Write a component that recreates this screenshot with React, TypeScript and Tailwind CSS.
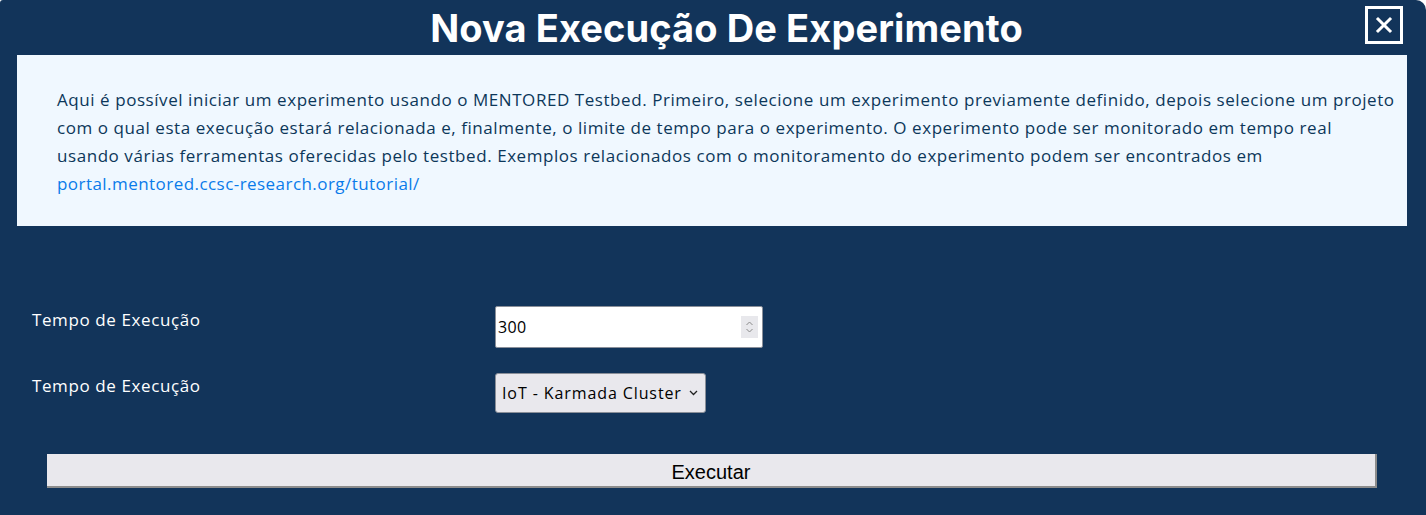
import React from "react";

export default function App() {
  return (
    <div className="w-[1426px] h-[515px] bg-white overflow-hidden">
      <div className="w-full h-full bg-[#12345a] rounded-tr-[10px] rounded-tl-[3px] flex flex-col">
        <div className="relative h-[55px] flex items-center justify-center pl-[27px]">
          <h1
            className="text-white text-[38px] font-bold leading-none tracking-[0.1px]"
            style={{ fontFamily: "Inter, 'Noto Sans', sans-serif" }}
          >
            Nova Execução De Experimento
          </h1>
          <button className="absolute left-[1365px] top-[6px] w-[38px] h-[38px] border-[3px] border-white flex items-center justify-center">
            <svg width="20" height="20" viewBox="0 0 20 20" fill="none" stroke="white" strokeWidth="3" strokeLinecap="square">
              <path d="M4 4 L16 16 M16 4 L4 16" />
            </svg>
          </button>
        </div>
        <div
          className="mx-[17px] mr-[19px] h-[171px] bg-[#f0f8ff] pl-[40px] pr-[4px] pt-[31px] text-[#0c375a] text-[17px] font-medium leading-[28px] tracking-[0.56px] whitespace-nowrap"
          style={{ fontFamily: "'Open Sans', sans-serif" }}
        >
          <p>
            Aqui é possível iniciar um experimento usando o MENTORED Testbed. Primeiro, selecione um experimento previamente definido, depois selecione um projeto
            <br />
            com o qual esta execução estará relacionada e, finalmente, o limite de tempo para o experimento. O experimento pode ser monitorado em tempo real
            <br />
            usando várias ferramentas oferecidas pelo testbed. Exemplos relacionados com o monitoramento do experimento podem ser encontrados em
            <br />
            <a className="text-[#0a7bea] tracking-[0.45px]" href="#">portal.mentored.ccsc-research.org/tutorial/</a>
          </p>
        </div>
        <div
          className="pl-[32px] pt-[80px] flex flex-col gap-[25px]"
          style={{ fontFamily: "'Open Sans', sans-serif" }}
        >
          <div className="flex items-center">
            <label className="w-[463px] text-white text-[17px] tracking-[0.6px] -mt-[14px]">Tempo de Execução</label>
            <div className="w-[268px] h-[42px] bg-white border border-[#8a8f99] rounded-[2px] flex items-center pl-[2px] pr-[4px]">
              <span className="flex-1 text-black text-[16px] tracking-[0.3px]">300</span>
              <div className="w-[17px] h-[22px] bg-[#e8e8ec] flex flex-col items-center justify-center">
                <svg width="9" height="14" viewBox="0 0 9 14" fill="none" stroke="#8a8a8a" strokeWidth="1">
                  <path d="M1.5 5 L4.5 2 L7.5 5 M1.5 9 L4.5 12 L7.5 9" />
                </svg>
              </div>
            </div>
          </div>
          <div className="flex items-center">
            <label className="w-[463px] text-white text-[17px] tracking-[0.6px] -mt-[14px]">Tempo de Execução</label>
            <div className="w-[211px] h-[40px] bg-[#e9e8ed] border border-[#8a8f99] rounded-[3px] flex items-center pl-[6px] pr-[7px]">
              <span className="flex-1 text-black text-[16px] tracking-[0.9px]">IoT - Karmada Cluster</span>
              <svg width="9" height="6" viewBox="0 0 9 6" fill="none" stroke="#222" strokeWidth="1.3">
                <path d="M1 1 L4.5 4.5 L8 1" />
              </svg>
            </div>
          </div>
        </div>
        <div className="pl-[47px] pt-[41px]">
          <button
            className="w-[1330px] h-[34px] bg-[#e9e8ed] border-r-[2px] border-b-[2px] border-[#8c8c8c] text-black text-[20px] pt-[3px] flex items-center justify-center"
            style={{ fontFamily: "'Liberation Sans', Arial, sans-serif" }}
          >
            Executar
          </button>
        </div>
      </div>
    </div>
  );
}
